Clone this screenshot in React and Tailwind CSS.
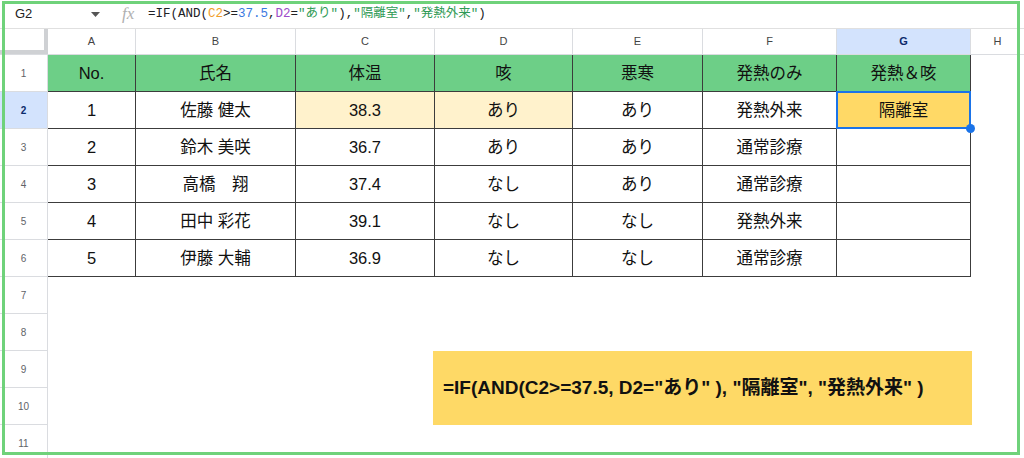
import React from "react";

const COLS = [
  { k: "A", w: "w-[88px]" },
  { k: "B", w: "w-[160px]" },
  { k: "C", w: "w-[139px]" },
  { k: "D", w: "w-[138px]" },
  { k: "E", w: "w-[130px]" },
  { k: "F", w: "w-[134px]" },
  { k: "G", w: "w-[134px]" },
];

const HEAD = ["No.", "氏名", "体温", "咳", "悪寒", "発熱のみ", "発熱＆咳"];
const ROWS = [
  ["1", "佐藤 健太", "38.3", "あり", "あり", "発熱外来", "隔離室"],
  ["2", "鈴木 美咲", "36.7", "あり", "あり", "通常診療", ""],
  ["3", "高橋　翔", "37.4", "なし", "あり", "通常診療", ""],
  ["4", "田中 彩花", "39.1", "なし", "なし", "発熱外来", ""],
  ["5", "伊藤 大輔", "36.9", "なし", "なし", "通常診療", ""],
];

const font = { fontFamily: '"Liberation Sans", "Noto Sans CJK JP", sans-serif' };

function RowHeader({ n, selected }) {
  return (
    <div
      className={`w-[48px] h-full shrink-0 flex items-center justify-center border-r border-b border-[#dadce0] text-[10px] ${
        selected ? "bg-[#d3e3fd] text-[#0b2a6b] font-bold" : "text-[#5f6368]"
      }`}
    >
      {n}
    </div>
  );
}

export default function App() {
  return (
    <div className="relative w-[1024px] h-[458px] overflow-hidden bg-white" style={font}>
      {/* formula bar */}
      <div className="h-[29px] flex items-center border-b border-[#e0e0e0]">
        <div className="w-[110px] flex items-center pl-[15px] text-[13px] text-[#222]">
          <span className="w-[75px]">G2</span>
          <svg width="9" height="5" viewBox="0 0 9 5" className="ml-[1px]">
            <path d="M0 0h9L4.5 5z" fill="#555" />
          </svg>
        </div>
        <span
          className="ml-[12px] text-[17px] italic text-[#b0b0b0] w-[26px]"
          style={{ fontFamily: '"Liberation Serif", serif' }}
        >
          fx
        </span>
        <span
          className="text-[12.5px] text-[#202124] whitespace-pre"
          style={{ fontFamily: '"Liberation Mono", "Noto Sans CJK JP", monospace' }}
        >
          =IF(AND(<span className="text-[#f09d2c]">C2</span>&gt;=<span className="text-[#3a78e0]">37.5</span>,
          <span className="text-[#9c4bc9]">D2</span>=<span className="text-[#2f9a55]">"あり"</span>),
          <span className="text-[#2f9a55]">"隔離室"</span>,<span className="text-[#2f9a55]">"発熱外来"</span>)
        </span>
      </div>

      {/* column header */}
      <div className="h-[26px] flex">
        <div className="w-[48px] shrink-0 relative border-b border-[#dadce0]">
          <div className="absolute right-0 top-0 bottom-0 w-[4px] bg-[#cfd1d4]" />
          <div className="absolute left-0 right-0 bottom-0 h-[4px] bg-[#cfd1d4]" />
        </div>
        {COLS.map((c) => (
          <div
            key={c.k}
            className={`${c.w} shrink-0 flex items-center justify-center border-r border-b border-[#dadce0] text-[11px] ${
              c.k === "G" ? "bg-[#d3e3fd] text-[#0b2a6b] font-bold" : "text-[#444]"
            }`}
          >
            {c.k}
          </div>
        ))}
        <div className="flex-1 flex items-center justify-center border-b border-[#dadce0] text-[11px] text-[#444]">
          H
        </div>
      </div>

      {/* header row 1 */}
      <div className="h-[37px] flex">
        <RowHeader n={1} />
        {HEAD.map((h, i) => (
          <div
            key={i}
            className={`${COLS[i].w} shrink-0 flex items-center justify-center bg-[#6dcf87] border-r border-b border-[#3c3c3c] text-[16.5px] text-[#111]`}
          >
            {h}
          </div>
        ))}
        <div className="flex-1" />
      </div>

      {ROWS.map((r, ri) => (
        <div key={ri} className="h-[37px] flex">
          <RowHeader n={ri + 2} selected={ri === 0} />
          {r.map((v, ci) => {
            const pale = ri === 0 && (ci === 2 || ci === 3);
            const sel = ri === 0 && ci === 6;
            return (
              <div
                key={ci}
                className={`${COLS[ci].w} shrink-0 relative flex items-center justify-center border-r border-b border-[#3c3c3c] text-[16.5px] text-[#111] ${
                  pale ? "bg-[#fff2cc]" : sel ? "bg-[#ffd966]" : "bg-white"
                }`}
              >
                {v}
                {sel && (
                  <>
                    <span className="absolute left-[-1px] top-[-1px] right-[-1px] bottom-[-1px] border-2 border-[#1a73e8]" />
                    <span className="absolute right-[-5px] bottom-[-5px] w-[9px] h-[9px] rounded-full bg-[#1a73e8] z-10" />
                  </>
                )}
              </div>
            );
          })}
          <div className="flex-1" />
        </div>
      ))}

      {[7, 8, 9, 10, 11].map((n) => (
        <div key={n} className="h-[37px] flex">
          <RowHeader n={n} />
          <div className="flex-1" />
        </div>
      ))}

      {/* callout box */}
      <div className="absolute left-[433px] top-[351px] w-[539px] h-[74px] bg-[#fed966] flex items-center pl-[10px] text-[19px] font-bold text-[#111]">
        =IF(AND(C2&gt;=37.5, D2="あり" ), "隔離室", "発熱外来" )
      </div>

      {/* green annotation frame */}
      <div className="absolute left-[2px] top-[1px] w-[1018px] h-[454px] border-[3px] border-[#6fd27a] pointer-events-none" />
    </div>
  );
}
